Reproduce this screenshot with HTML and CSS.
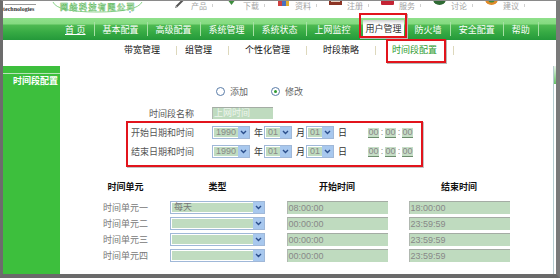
FILE: index.html
```html
<!DOCTYPE html>
<html lang="zh-CN">
<head>
<meta charset="utf-8">
<title>时间段配置</title>
<link rel="stylesheet" href="styles.css">
</head>
<body>
<div class="frame">
  <header class="top">
    <div class="brand">
      <span class="brand-rule"></span>
      <span class="brand-tech">technologies</span>
    </div>
    <div class="logo">
      <svg width="95" height="17" viewBox="0 0 95 17">
        <path d="M2 1 Q6 11 46 11 Q86 11 91 1" fill="none" stroke="#8cd48c" stroke-width="1"/>
        <text x="9" y="9" font-size="8" font-weight="bold" fill="#f2fbf2" stroke="#5cb85c" stroke-width="0.5" font-family="Noto Sans CJK SC, sans-serif" letter-spacing="1.5">网络科技有限公司</text>
        <circle cx="79" cy="11" r="1" fill="#9cc0e8"/>
      </svg>
    </div>
    <ul class="quick">
      <li><svg width="13" height="9" viewBox="0 0 13 9"><path d="M3 8 L10 1" stroke="#555" stroke-width="2"/><path d="M2 9 L4 7" stroke="#999" stroke-width="1"/></svg><span>产品</span></li>
      <li><svg width="13" height="9" viewBox="0 0 13 9"><path d="M2 0 H11 L6.5 6 Z" fill="#3e8e3e"/></svg><span>下载</span></li>
      <li><svg width="13" height="9" viewBox="0 0 13 9"><rect x="1" y="1" width="4" height="6" fill="#d04040"/><rect x="5" y="2" width="4" height="5" fill="#4a70c0"/><rect x="9" y="1" width="3" height="6" fill="#e0b030"/></svg><span>资料</span></li>
      <li><svg width="13" height="9" viewBox="0 0 13 9"><rect x="0" y="0" width="13" height="6" fill="#8c3424"/><rect x="2" y="1" width="9" height="2" fill="#e8d0c0"/></svg><span>注册</span></li>
      <li><svg width="13" height="9" viewBox="0 0 13 9"><rect x="0" y="1" width="13" height="5" rx="1" fill="#c42434"/></svg><span>服务</span></li>
      <li><svg width="13" height="9" viewBox="0 0 13 9"><path d="M0 0 H13 A6.5 6 0 0 1 0 0 Z" fill="#2f6a34"/></svg><span>讨论</span></li>
      <li><svg width="13" height="9" viewBox="0 0 13 9"><path d="M0 0 H13 A6.5 6 0 0 1 0 0 Z" fill="#e08a2a"/><path d="M3 0 H10 A3.5 3.5 0 0 1 3 0 Z" fill="#3c8c3c"/></svg><span>建议</span></li>
    </ul>
  </header>

  <nav class="nav">
    <a class="home">首 页</a><i class="sep"></i>
    <a>基本配置</a><i class="sep"></i>
    <a>高级配置</a><i class="sep"></i>
    <a>系统管理</a><i class="sep"></i>
    <a>系统状态</a><i class="sep"></i>
    <a>上网监控</a>
    <a class="on">用户管理</a><i class="sep"></i>
    <a>防火墙</a><i class="sep"></i>
    <a>安全配置</a><i class="sep"></i>
    <a>帮助</a><i class="sep"></i>
  </nav>

  <div class="subnav">
    <a>带宽管理</a><i class="sep"></i>
    <a class="group">组管理</a><i class="sep"></i>
    <a>个性化管理</a><i class="sep"></i>
    <a>时段策略</a><i class="sep"></i>
    <a class="cur">时间段配置</a><i class="sep"></i>
  </div>

  <div class="main">
    <aside class="side">
      <div class="side-cap"></div>
      <div class="side-title">时间段配置</div>
    </aside>

    <section class="content">
      <div class="radios">
        <span class="radio"></span><span class="radio-label">添加</span>
        <span class="radio on"></span><span class="radio-label">修改</span>
      </div>

      <div class="form">
        <div class="row name-row">
          <span class="lbl">时间段名称</span>
          <span class="txt name">上网时间</span>
        </div>

        <div class="mark">
          <div class="row">
            <span class="lbl">开始日期和时间</span>
            <span class="sel year"><span class="sel-val">1990</span><span class="sel-btn"><svg width="7" height="5" viewBox="0 0 7 5"><path d="M1 1 L3.5 3.5 L6 1" fill="none" stroke="#2b4f8c" stroke-width="1.4"/></svg></span></span>
            <span class="unit">年</span>
            <span class="sel small"><span class="sel-val">01</span><span class="sel-btn"><svg width="7" height="5" viewBox="0 0 7 5"><path d="M1 1 L3.5 3.5 L6 1" fill="none" stroke="#2b4f8c" stroke-width="1.4"/></svg></span></span>
            <span class="unit">月</span>
            <span class="sel small"><span class="sel-val">01</span><span class="sel-btn"><svg width="7" height="5" viewBox="0 0 7 5"><path d="M1 1 L3.5 3.5 L6 1" fill="none" stroke="#2b4f8c" stroke-width="1.4"/></svg></span></span>
            <span class="unit">日</span>
            <span class="time"><span class="tf">00</span><span class="colon">:</span><span class="tf">00</span><span class="colon">:</span><span class="tf">00</span></span>
          </div>
          <div class="row">
            <span class="lbl">结束日期和时间</span>
            <span class="sel year"><span class="sel-val">1990</span><span class="sel-btn"><svg width="7" height="5" viewBox="0 0 7 5"><path d="M1 1 L3.5 3.5 L6 1" fill="none" stroke="#2b4f8c" stroke-width="1.4"/></svg></span></span>
            <span class="unit">年</span>
            <span class="sel small"><span class="sel-val">01</span><span class="sel-btn"><svg width="7" height="5" viewBox="0 0 7 5"><path d="M1 1 L3.5 3.5 L6 1" fill="none" stroke="#2b4f8c" stroke-width="1.4"/></svg></span></span>
            <span class="unit">月</span>
            <span class="sel small"><span class="sel-val">01</span><span class="sel-btn"><svg width="7" height="5" viewBox="0 0 7 5"><path d="M1 1 L3.5 3.5 L6 1" fill="none" stroke="#2b4f8c" stroke-width="1.4"/></svg></span></span>
            <span class="unit">日</span>
            <span class="time"><span class="tf">00</span><span class="colon">:</span><span class="tf">00</span><span class="colon">:</span><span class="tf">00</span></span>
          </div>
        </div>
      </div>

      <div class="units">
        <span class="th">时间单元</span><span class="th">类型</span><span class="th">开始时间</span><span class="th">结束时间</span>

        <span class="ulbl">时间单元一</span>
        <span class="sel wide"><span class="sel-val">每天</span><span class="sel-btn"><svg width="7" height="5" viewBox="0 0 7 5"><path d="M1 1 L3.5 3.5 L6 1" fill="none" stroke="#2b4f8c" stroke-width="1.4"/></svg></span></span>
        <span class="txt tcell">08:00:00</span><span class="txt tcell">18:00:00</span>

        <span class="ulbl">时间单元二</span>
        <span class="sel wide"><span class="sel-val"></span><span class="sel-btn"><svg width="7" height="5" viewBox="0 0 7 5"><path d="M1 1 L3.5 3.5 L6 1" fill="none" stroke="#2b4f8c" stroke-width="1.4"/></svg></span></span>
        <span class="txt tcell">00:00:00</span><span class="txt tcell">23:59:59</span>

        <span class="ulbl">时间单元三</span>
        <span class="sel wide"><span class="sel-val"></span><span class="sel-btn"><svg width="7" height="5" viewBox="0 0 7 5"><path d="M1 1 L3.5 3.5 L6 1" fill="none" stroke="#2b4f8c" stroke-width="1.4"/></svg></span></span>
        <span class="txt tcell">00:00:00</span><span class="txt tcell">23:59:59</span>

        <span class="ulbl">时间单元四</span>
        <span class="sel wide"><span class="sel-val"></span><span class="sel-btn"><svg width="7" height="5" viewBox="0 0 7 5"><path d="M1 1 L3.5 3.5 L6 1" fill="none" stroke="#2b4f8c" stroke-width="1.4"/></svg></span></span>
        <span class="txt tcell">00:00:00</span><span class="txt tcell">23:59:59</span>
      </div>
    </section>

    <div class="scroll"><div class="thumb"></div></div>
  </div>
</div>
</body>
</html>
```

FILE: styles.css
```css
* { box-sizing: border-box; margin: 0; padding: 0; }
html, body { width: 560px; height: 278px; overflow: hidden; background: #fff; }
body {
  font-family: "Liberation Sans", "Noto Sans CJK SC", sans-serif;
  font-size: 9px;
  color: #333;
}
ul { list-style: none; }
a { text-decoration: none; }

.frame {
  width: 560px;
  height: 278px;
  border-left: 3px solid #6c6c6c;
  border-top: 1px solid #8a8a8a;
  border-right: 4px solid #7a7a7a;
  border-bottom: 4px solid #6a6a6a;
  display: flex;
  flex-direction: column;
}

/* ---------- top header ---------- */
.top { height: 17px; flex: none; display: flex; overflow: hidden; }
.brand { width: 48px; padding-top: 3px; }
.brand-rule { display: block; width: 31px; height: 1px; background: #9a9a9a; margin-left: 2px; }
.brand-tech {
  display: block;
  font-family: "Liberation Serif", serif;
  font-size: 6px;
  font-weight: bold;
  line-height: 7px;
  color: #333;
  margin-top: 1px;
}
.logo { width: 95px; height: 17px; }
.logo svg { display: block; }
.quick { display: flex; margin-left: 27px; margin-top: -2px; }
.quick li {
  width: 52px;
  height: 12px;
  display: flex;
  align-items: center;
  gap: 5px;
  color: #a4a4a4;
  font-size: 8px;
}
.quick li svg { display: block; margin-top: -3px; }
.quick li::after { content: ""; width: 1px; height: 3px; background: #d0d0d0; }

/* ---------- main nav ---------- */
.nav {
  height: 22px;
  flex: none;
  display: flex;
  align-items: center;
  padding-left: 54px;
  background: linear-gradient(#8fe08b 0, #84da80 6px, #4fba52 7px, #37ab44 14px, #24993a 22px);
}
.nav a { color: #fff; padding: 3px 8px 0; line-height: 19px; }
.nav .home { text-decoration: underline; }
.nav .sep { width: 1px; height: 14px; background: #a6e0a4; }
.nav .on {
  position: relative;
  align-self: flex-start;
  margin: 2px 2px 0 4px;
  height: 17px;
  padding: 2px 2px 0 3px;
  line-height: 15px;
  color: #333;
  background: linear-gradient(#cfcfcf 0, #f4f4f4 3px, #fff 5px);
}
.nav .on::after {
  content: "";
  position: absolute;
  left: -4px;
  right: -3px;
  top: -7px;
  bottom: -1px;
  border: 2px solid #e2141c;
  box-shadow: 1px 1px 0 #b8b8b8;
}

/* ---------- sub nav ---------- */
.subnav {
  height: 26px;
  flex: none;
  display: flex;
  align-items: center;
  padding-left: 105px;
  padding-bottom: 6px;
}
.subnav a { padding: 0 16px; color: #111; line-height: 12px; }
.subnav .group { padding: 0 16px 0 8px; }
.subnav .sep { width: 1px; height: 9px; background: #ddd8bc; }
.subnav .cur { position: relative; color: #2e9a2e; }
.subnav .cur::after {
  content: "";
  position: absolute;
  left: 10px;
  right: 7px;
  top: -5px;
  bottom: -7px;
  border: 2px solid #e2141c;
  box-shadow: 1px 1px 0 #b8b8b8;
}

/* ---------- main area ---------- */
.main { flex: 1; display: flex; min-height: 0; }
.side { width: 57px; flex: none; background: #3dbf3d; }
.side-cap { height: 8px; border-bottom: 1px solid #b9e4b9; }
.side-title {
  color: #fff;
  font-weight: bold;
  text-align: right;
  padding-right: 2px;
  line-height: 12px;
  margin-top: 1px;
}
.content { flex: 1; }
.scroll { width: 3px; flex: none; border-left: 1px solid #b4ccd0; background: #fff; }
.thumb { height: 18px; background: linear-gradient(#e8f4e8, #66c266); }

/* radios */
.radios {
  display: flex;
  align-items: center;
  height: 12px;
  margin-top: 19px;
  padding-left: 156px;
  color: #666;
}
.radio {
  width: 9px;
  height: 9px;
  border-radius: 50%;
  border: 1px solid #5a7ca8;
  background: #fff;
  margin-right: 5px;
  display: flex;
  align-items: center;
  justify-content: center;
}
.radio.on::after { content: ""; width: 3px; height: 3px; border-radius: 50%; background: #2f9a2f; }
.radio-label + .radio { margin-left: 23px; }

/* form */
.form { margin-left: 66px; }
.row { display: flex; align-items: center; height: 13px; }
.lbl { width: 66px; text-align: right; color: #555; margin-right: 18px; }
.name-row { margin-top: 10px; height: 12px; }
.name-row .lbl { width: 68px; }

.txt {
  display: block;
  height: 12px;
  background: #bfdbbf;
  border-top: 1px solid #a4aca4;
  border-left: 1px solid #b0b8b0;
  color: #888;
  line-height: 11px;
  padding-left: 1px;
}
.name { width: 61px; color: #eef6ee; }

.mark {
  margin-top: 2px;
  width: 297px;
  border: 2px solid #e2141c;
  box-shadow: 1px 1px 0 #c4c4c4;
  padding: 3px 0 7px;
  display: flex;
  flex-direction: column;
  gap: 6px;
}

.sel {
  display: flex;
  height: 13px;
  border: 1px solid #a0b8d8;
  background: #fff;
  padding: 1px 0 1px 1px;
}
.sel-val {
  flex: 1;
  background: #c0dcc0;
  color: #888;
  line-height: 9px;
  padding-left: 2px;
}
.sel-btn {
  width: 11px;
  margin-top: -1px;
  margin-bottom: -1px;
  background: #a8c8ee;
  display: flex;
  align-items: center;
  justify-content: center;
}
.sel-btn svg { display: block; }
.year { width: 38px; }
.small { width: 28px; }
.unit { color: #333; margin: 0 1px 0 4px; width: 9px; }
.time { display: flex; align-items: center; margin-left: 20px; }
.tf {
  width: 11px;
  height: 10px;
  background: #c6dec6;
  border-bottom: 1px solid #6c8c6c;
  color: #888;
  text-align: center;
  line-height: 9px;
}
.colon { width: 6px; text-align: center; color: #888; line-height: 9px; }

/* time units table */
.units {
  margin-top: 19px;
  margin-left: 30px;
  display: grid;
  grid-template-columns: 71px 113px 126px 118px;
  grid-template-rows: 12px repeat(4, 13px);
  row-gap: 3px;
  justify-items: center;
  align-items: center;
}
.th { font-weight: bold; color: #111; line-height: 12px; margin-bottom: 10px; }
.ulbl { color: #777; line-height: 12px; }
.wide { width: 95px; }
.wide .sel-val { color: #777; }
.tcell { width: 101px; height: 13px; line-height: 12px; }
```
